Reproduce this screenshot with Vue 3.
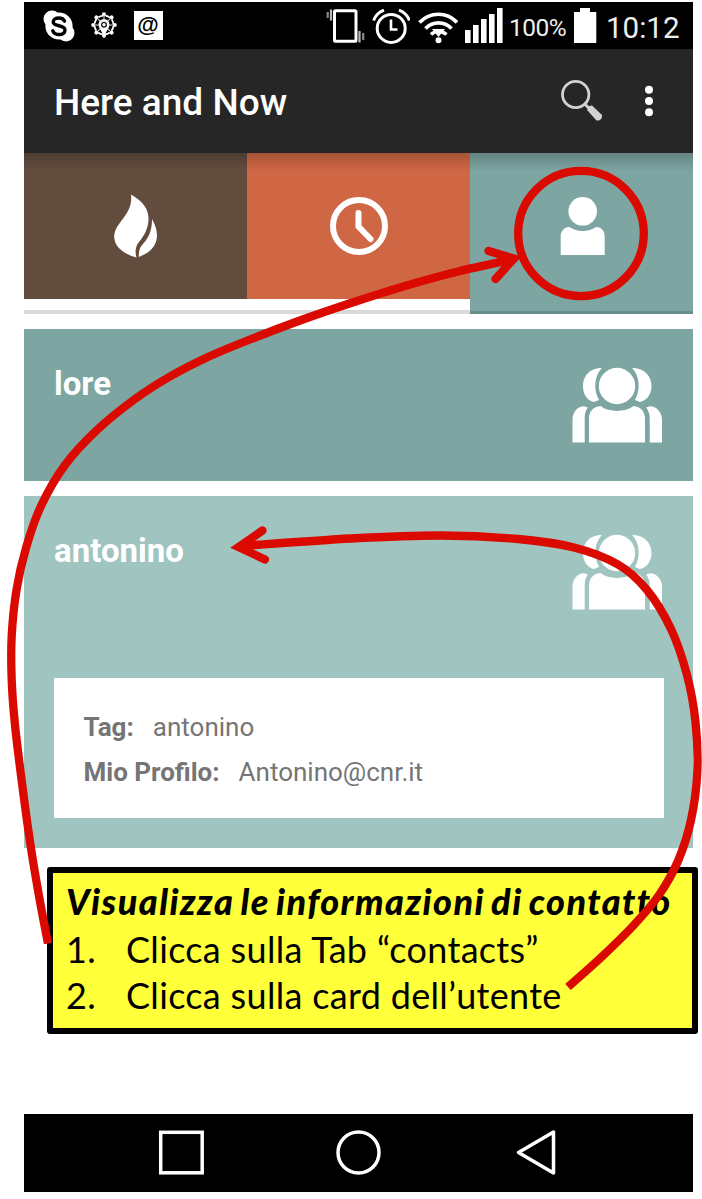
<script setup>
const smooth = (points) => {
  let d = `M${points[0].join(' ')}`
  for (let i = 0; i < points.length - 1; i++) {
    const a = points[i - 1] || points[i]
    const b = points[i]
    const c = points[i + 1]
    const e = points[i + 2] || c
    d += ` C${b[0] + (c[0] - a[0]) / 6} ${b[1] + (c[1] - a[1]) / 6} ${c[0] - (e[0] - b[0]) / 6} ${c[1] - (e[1] - b[1]) / 6} ${c[0]} ${c[1]}`
  }
  return d
}

const tabArrow = smooth([
  [48, 943.5], [39, 896], [30.5, 845], [22.5, 787], [15, 725], [11.7, 680], [11.7, 636], [16.500, 590],
  [26, 548], [41, 506], [65, 465], [97, 430], [135, 399], [170, 376.5], [208, 357], [250, 339.5],
  [300, 320.5], [351, 303], [405, 286], [460, 271], [512, 259.5],
])
const cardArrow = smooth([
  [568, 987], [601, 957.5], [633, 926], [659, 895], [678, 861], [691, 820], [697.3, 772], [695.5, 722],
  [687, 675], [671, 629], [647, 590], [618, 564.500], [574, 547.5], [518, 539], [441, 535.5],
  [351, 538.5], [242, 546],
])

const cards = [
  { name: 'lore', open: false },
  { name: 'antonino', open: true },
]
const details = [
  { label: 'Tag:', value: 'antonino' },
  { label: 'Mio Profilo:', value: 'Antonino@cnr.it' },
]
const spokes = [0, 45, 90, 135, 180, 225, 270, 315]
</script>

<template>
  <main class="page">
    <div class="phone">
      <header class="status">
        <div class="notifications">
          <svg width="32" height="33" viewBox="0 0 32 33">
            <g fill="#fff">
              <circle cx="9" cy="9" r="8.5" /><circle cx="23" cy="23" r="8.5" />
              <circle cx="16" cy="16" r="13.6" />
            </g>
            <path d="M21.5 11.2C20.5 8.600 18.300 8 15.700 8C12.500 8 10.200 9.600 10.200 12C10.200 17.200 22 14.300 22 20C22 22.800 19.500 24.500 16.300 24.500C13 24.500 10.800 23.300 9.800 20.800" fill="none" stroke="#000" stroke-width="3.400" stroke-linecap="round" />
          </svg>
          <svg class="wheel" width="26" height="27" viewBox="-13 -13 26 27">
            <g v-for="a in spokes" :key="a" :transform="`rotate(${a})`">
              <circle cx="0" cy="-10.800" r="2" fill="#fff" />
              <path d="M0-10V-5" stroke="#ddd" stroke-width="1" />
            </g>
            <circle r="9.500" fill="none" stroke="#fff" stroke-width="1.800" stroke-dasharray="5 2.460" stroke-dashoffset="-1.200" />
            <path d="M0 13C-1 7-5.500 3.500-5.500-.5A5.500 5.500 0 0 1 5.500-.5C5.500 3.500 1 7 0 13Z" fill="#fff" />
            <circle cy="-.3" r="2.300" fill="#fff" stroke="#222" stroke-width="1.400" />
          </svg>
          <span class="at">@</span>
        </div>
        <div class="indicators">
          <svg width="39" height="36" viewBox="325 7 39 36">
            <rect x="333.500" y="10.700" width="21.500" height="30.500" rx="1" fill="none" stroke="#fff" stroke-width="3" />
            <path d="M330 9.500V20.500M358.500 31V42.500" stroke="#bbb" stroke-width="2.200" />
            <path d="M326.700 12V18M362.200 33V40" stroke="#888" stroke-width="2.200" />
          </svg>
          <svg class="alarm" width="38" height="37" viewBox="371 8 38 37">
            <g fill="none" stroke="#fff" stroke-width="3">
              <circle cx="390.200" cy="28.400" r="14" />
              <path d="M390 19.500V29.500H396.500" stroke-width="2.600" />
              <path d="M372.600 20.500C374.500 15.500 378 12 383 10.200M408.400 20.500C406.500 15.500 403 12 398 10.200" />
            </g>
          </svg>
          <svg class="wifi" width="40" height="34" viewBox="417 11 40 34">
            <g fill="none" stroke="#fff" stroke-width="3.700">
              <path d="M418.500 22.500C429 11.500 446 11.500 456 22.500" />
              <path d="M424.500 28.500C432 21 443 21 450.500 28.500" />
              <path d="M430 34.500C434 30.500 441 30.500 445.500 34.500" stroke-width="3.500" />
            </g>
            <path d="M431 29H444L437.500 37Z" fill="#fff" />
            <circle cx="437.500" cy="40.200" r="3" fill="#fff" />
          </svg>
          <svg class="signal" width="38" height="36" viewBox="465 8 38 36">
            <path d="M465 30h5.600v13H465zM473 25h5.600v18H473zM481 19h5.600v24H481zM489 14h5.600v29H489zM497 8h5.600v35H497z" fill="#fff" />
          </svg>
          <span class="percent">100%</span>
          <svg class="battery" width="23" height="36" viewBox="0 0 23 36">
            <path d="M0 4H6V0H16V4H22.300V35H0Z" fill="#fff" />
          </svg>
          <span class="clock">10:12</span>
        </div>
      </header>

      <div class="appbar">
        <h1>Here and Now</h1>
        <svg class="search" width="42" height="42" viewBox="561 79 42 42">
          <circle cx="575.700" cy="94.500" r="13.200" fill="none" stroke="#d2d2d2" stroke-width="2.800" />
          <path d="M584 103.500L590 109" stroke="#d2d2d2" stroke-width="3" />
          <path d="M587 106.500L592 105.500L602 115C602.500 118.500 600 121 596.500 120.500L587.500 110.500Z" fill="#d2d2d2" />
        </svg>
        <svg width="10" height="32" viewBox="0 0 10 32" fill="#fff">
          <circle cx="5" cy="4.700" r="4" /><circle cx="5" cy="16" r="4" /><circle cx="5" cy="27.200" r="4" />
        </svg>
      </div>

      <nav class="tabs">
        <div class="tab hot">
          <svg width="44" height="64" viewBox="114 194 44 64" fill="#fff">
            <path d="M131 194.500C144 202 149 210 148.500 220C148 229 144 236 139 242C135 247 135 252 136.500 257.500C123 254 114 246 114.200 236.500C114.500 222 133.500 215 131 194.500Z" />
            <path d="M152 219C156 226 157.500 232 156.800 238C155.500 248 148 253.500 138.700 257C139 251 139.500 247.500 143 244C149.500 237 152 229 152 219Z" />
          </svg>
        </div>
        <div class="tab recent">
          <svg width="60" height="60" viewBox="0 0 60 60" fill="none" stroke="#fff" stroke-width="6">
            <circle cx="30" cy="30" r="26" />
            <path d="M29.500 17V30.500L41.500 43" stroke-linecap="round" />
          </svg>
        </div>
        <div class="tab contacts">
          <svg width="46" height="60" viewBox="560 196 46 60" fill="#fff">
            <circle cx="582.700" cy="211.300" r="14.300" />
            <path d="M569.500 227C577 232.300 588.500 232.300 596 227C602 227 604.700 232 604.700 236V255H560.700V236C560.700 232 563.500 227 569.500 227Z" />
          </svg>
        </div>
      </nav>

      <section v-for="card in cards" :key="card.name" class="card" :class="{ open: card.open }">
        <div class="summary">
          <h2>{{ card.name }}</h2>
          <svg width="90" height="76" viewBox="572 367 90 76" fill="#fff">
            <circle cx="617" cy="386" r="18.200" />
            <path d="M601.800 368C588 368 583 378 583 386C583 394 587 400.500 594 402L599 400C593 389 594.500 376 601.800 368Z" />
            <path d="M632.200 368C646 368 651.500 378 651.500 386C651.500 394 647 400.500 640 402L635 400C641 389 639.500 376 632.200 368Z" />
            <path d="M600.500 406C609 412.500 625 412.500 633.500 406C641 406.500 645 412 645 418.500V442.500H589V418.500C589 412 593 406.500 600.500 406Z" />
            <path d="M584 406.300L587.800 407.500C585.500 411 584.700 414 584.700 418V442.500H572.500V420C572.500 412 577.500 406.500 584 406.300Z" />
            <path d="M650 406.300L646.200 407.500C648.500 411 649.700 414 649.700 418V442.500H662V420C662 412 656.500 406.500 650 406.300Z" />
          </svg>
        </div>
        <dl v-if="card.open" class="details">
          <div v-for="row in details" :key="row.label">
            <dt>{{ row.label }}</dt><dd>{{ row.value }}</dd>
          </div>
        </dl>
      </section>

      <footer class="navbar">
        <svg width="669" height="78" viewBox="24 1114 669 78" fill="none" stroke="#fff" stroke-width="3.500">
          <rect x="160.700" y="1132.300" width="41.500" height="40.500" />
          <circle cx="358.500" cy="1152.500" r="20.500" />
          <path d="M553.500 1132V1173L518.500 1152.500Z" stroke-linejoin="round" />
        </svg>
      </footer>
    </div>

    <aside class="callout">
      <p class="lead">Visualizza le informazioni di contatto</p>
      <p class="step"><span class="number">1.</span><span>Clicca sulla Tab “contacts”</span></p>
      <p class="step"><span class="number">2.</span><span>Clicca sulla card dell’utente</span></p>
    </aside>

    <svg class="annotations" width="702" height="1199" viewBox="0 0 702 1199" fill="none" stroke="#db0a00" stroke-width="8.300">
      <ellipse cx="581" cy="233.500" rx="62.800" ry="62.600" />
      <path :d="tabArrow" />
      <path d="M488.500 251L514 258.500L495.500 279" stroke-linecap="round" stroke-miterlimit="10" />
      <path :d="cardArrow" />
      <path d="M262.500 530.500L238.500 547L265 559.500" stroke-linecap="round" stroke-miterlimit="10" />
    </svg>
  </main>
</template>

<style>
body { background: #fff; }
</style>

<style scoped>
.page {
  position: relative;
  width: 702px;
  height: 1199px;
  overflow: hidden;
  font-family: Roboto, "Liberation Sans", sans-serif;
}
h1, h2, p, dl, dd { margin: 0; }
svg { display: block; flex: none; }
.phone {
  display: flex;
  flex-direction: column;
  box-sizing: border-box;
  width: 669px;
  height: 1192px;
  margin-left: 24px;
  padding-top: 2px;
}
.status {
  display: flex;
  justify-content: space-between;
  height: 47px;
  padding: 0 12px 0 19px;
  background: #000;
  color: #fff;
}
.notifications, .indicators { display: flex; align-items: flex-start; }
.notifications { padding-top: 8px; }
.wheel { margin: 2px 0 0 15.500px; }
.at {
  box-sizing: border-box;
  width: 29px;
  height: 29px;
  margin: 1px 0 0 17px;
  background: #fff;
  color: #000;
  font: 700 22px/27px "Liberation Sans", sans-serif;
  text-align: center;
}
.indicators { padding-top: 5px; }
.alarm { margin: 1px 0 0 7px; }
.wifi { margin: 4px 0 0 8px; }
.signal { margin: 1px 0 0 7px; }
.percent { width: 58px; margin: 6px 0 0 6px; font-size: 24.500px; line-height: 30px; letter-spacing: -0.500px; color: #eee; }
.battery { margin: 1px 0 0 7px; }
.clock { width: 75px; margin-left: 9px; font-size: 29.500px; line-height: 42px; color: #eee; }
.appbar {
  display: flex;
  align-items: center;
  height: 104px;
  padding: 0 39px 0 30px;
  background: #262626;
  color: #fff;
}
.appbar h1 { flex: 1; padding-top: 3px; font-size: 37px; font-weight: 500; }
.search { margin: -3px 41px 0 0; }
.tabs {
  position: relative;
  display: grid;
  grid-template-columns: 223px 223px 1fr;
  height: 160.500px;
  background: linear-gradient(#fff 157.500px, #d9d9d9 157.500px);
}
.tabs::after {
  content: "";
  position: absolute;
  inset: 0 0 auto;
  height: 18px;
  background: linear-gradient(rgba(0, 0, 0, 0.200), transparent);
}
.tab { display: flex; justify-content: center; align-items: center; height: 146px; }
.hot { background: #624c3e; }
.recent { background: #d06744; }
.contacts {
  box-sizing: border-box;
  height: 161px;
  padding: 0 0 12px 2px;
  border-bottom: 3px solid #678e8b;
  background: #7da5a2;
}
.card { margin-top: 15px; background: #7da5a2; }
.card.open { height: 351.500px; background: #a0c4c0; }
.summary {
  display: flex;
  justify-content: space-between;
  align-items: flex-start;
  box-sizing: border-box;
  height: 152.500px;
  padding: 38px 31px 0 30px;
}
.summary h2 { margin-top: -2px; color: #fff; font-size: 33px; font-weight: 700; line-height: 38px; }
.details {
  display: flex;
  flex-direction: column;
  justify-content: center;
  box-sizing: border-box;
  width: 610px;
  height: 140px;
  margin: 29.500px 0 0 29.500px;
  padding: 4px 0 0 30px;
  background: #fff;
  color: #757575;
  font-size: 26px;
  line-height: 45px;
}
.details div { display: flex; }
.details dt { margin-right: 19px; font-weight: 700; }
.navbar { height: 78px; margin-top: auto; background: #000; }
.callout {
  position: absolute;
  left: 47px;
  top: 867px;
  box-sizing: border-box;
  width: 651px;
  height: 167px;
  padding: 5px 0 0 13px;
  border: 6px solid #000;
  border-radius: 3px;
  background: #ffff3a;
  color: #000;
  font-family: Lato, sans-serif;
  font-size: 36px;
  line-height: 46px;
  letter-spacing: 0.320px;
  font-variant-ligatures: none;
  white-space: nowrap;
}
.lead { margin-bottom: 2px; font-weight: 900; font-style: italic; letter-spacing: 1.450px; word-spacing: -3px; }
.step { display: flex; }
.number { width: 60px; }
.annotations { position: absolute; left: 0; top: 0; }
</style>
